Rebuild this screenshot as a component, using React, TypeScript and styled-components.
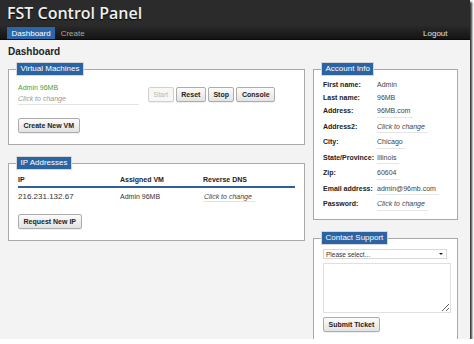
import React from "react";
import styled, { createGlobalStyle } from "styled-components";

const Global = createGlobalStyle`
  html, body { margin: 0; padding: 0; background: #ffffff; }
  body { font-family: "Liberation Sans", Arial, sans-serif; color: #222; }
  * { box-sizing: border-box; }
`;

const Window = styled.div`
  width: 470px;
  height: 339px;
  overflow: hidden;
  background: #f3f3f3;
  box-shadow: 2px 2px 2px rgba(0, 0, 0, 0.8);
  display: flex;
  flex-direction: column;
`;

const TitleBar = styled.header`
  flex-shrink: 0;
  height: 26px;
  background: #2b2b2b;
  display: flex;
  align-items: center;
  padding-left: 7px;
`;

const Title = styled.h1`
  margin: 0;
  font: 600 16px/1 "Open Sans", "Noto Sans", sans-serif;
  color: #f0f0f0;
  text-shadow: 0 1px 1px #000;
`;

const NavBar = styled.nav`
  flex-shrink: 0;
  height: 14px;
  background: linear-gradient(#282828, #151515);
  border-bottom: 1px solid #0a0a0a;
  display: flex;
  align-items: stretch;
  padding: 1px 17px 0 7px;
`;

const NavLink = styled.a<{ $active?: boolean; $light?: boolean }>`
  display: flex;
  align-items: center;
  padding: 0 4.5px;
  font-size: 8px;
  color: ${(p) => (p.$active ? "#ffffff" : p.$light ? "#e0e0e0" : "#a8a8a8")};
  background: ${(p) => (p.$active ? "#2b67a8" : "transparent")};
  text-decoration: none;
  margin-right: 1px;
`;

const Spacer = styled.div`
  flex: 1;
`;

const Main = styled.main`
  flex-shrink: 0;
  padding: 7px 13px 0 8px;
`;

const Heading = styled.h2`
  margin: 0 0 6px;
  font: bold 10px/10px "Liberation Sans", Arial, sans-serif;
  color: #222;
`;

const Columns = styled.div`
  display: grid;
  grid-template-columns: 297px 145px;
  column-gap: 8px;
  align-items: start;
`;

const Column = styled.div`
  display: flex;
  flex-direction: column;
  gap: 12px;
`;

const Panel = styled.fieldset<{ $pb: number; $pr?: number }>`
  margin: 0;
  min-width: 0;
  border: 1px solid #a9a9a9;
  background: #ffffff;
  padding: 0 ${(p) => p.$pr ?? 9}px ${(p) => p.$pb}px 9px;
`;

const Legend = styled.legend`
  background: #2c64a3;
  color: #ffffff;
  font: 8px/10px "Liberation Sans", Arial, sans-serif;
  padding: 1px 3.5px;
  margin-left: -1px;
  box-shadow: 0 0 0 1px #d6d6d6;
`;

const VmRow = styled.div`
  display: flex;
  align-items: center;
  margin-top: 9px;
`;

const VmName = styled.div`
  width: 121px;
  display: flex;
  flex-direction: column;
  margin-right: 9px;
`;

const GreenName = styled.div`
  font-size: 7px;
  line-height: 8px;
  color: #44a044;
`;

const Editable = styled.span<{ $block?: boolean; $muted?: boolean }>`
  display: ${(p) => (p.$block ? "block" : "inline-block")};
  font-size: 7px;
  line-height: 8px;
  font-style: italic;
  color: ${(p) => (p.$muted ? "#9a9a9a" : "#444")};
  border-bottom: 1px solid #e3e3e3;
  padding: ${(p) => (p.$block ? "3px 0 1px" : "0 3px 0 1px")};
`;

const ButtonGroup = styled.div`
  display: flex;
  gap: 2px;
`;

const Button = styled.button`
  height: 15px;
  padding: 0 4.5px;
  font: bold 7px/1 "Liberation Sans", Arial, sans-serif;
  color: #222;
  background: linear-gradient(#fbfbfb, #e3e3e3);
  border: 1px solid #acacac;
  border-radius: 2px;
  box-shadow: 0 1px 0 rgba(0, 0, 0, 0.06);
  cursor: pointer;

  &:disabled {
    font-weight: normal;
    color: #b8b8b8;
    border-color: #d0d0d0;
    background: #f7f7f7;
  }
`;

const BlockButton = styled(Button)<{ $mt: number }>`
  align-self: flex-start;
  margin-top: ${(p) => p.$mt}px;
`;

const PanelBody = styled.div`
  display: flex;
  flex-direction: column;
`;

const Table = styled.div`
  display: grid;
  grid-template-columns: 102px 83px 1fr;
  margin-top: 7px;
`;

const HeadCell = styled.div`
  font: bold 7px/8px "Liberation Sans", Arial, sans-serif;
  color: #222;
  padding-bottom: 2px;
  border-bottom: 2px solid #2f609c;
`;

const Cell = styled.div<{ $size?: number }>`
  font-size: ${(p) => p.$size ?? 7}px;
  line-height: 8px;
  color: #333;
  padding-top: 5px;
`;

const InfoList = styled.div`
  margin-top: 3.5px;
  display: flex;
  flex-direction: column;
`;

const InfoRow = styled.div`
  display: grid;
  grid-template-columns: 54px 1fr;
  align-items: start;
  padding: 2.5px 0;
  font-size: 7px;
  line-height: 8px;
`;

const Label = styled.span`
  font-weight: bold;
  color: #222;
`;

const Value = styled.span<{ $editable?: boolean; $italic?: boolean }>`
  justify-self: start;
  color: #444;
  font-style: ${(p) => (p.$italic ? "italic" : "normal")};
  ${(p) =>
    p.$editable
      ? "padding: 0 3px 1.5px 0; border-bottom: 1px solid #e6e6e6;"
      : ""}
`;

const SelectBox = styled.div`
  margin-top: 5px;
  width: 124px;
  height: 10px;
  border: 1px solid #d8d8d8;
  background: #fff;
  display: flex;
  align-items: center;
  justify-content: space-between;
  padding: 0 3px 0 2px;
  font-size: 6.5px;
  color: #333;
`;

const Caret = styled.span`
  width: 0;
  height: 0;
  border-left: 2px solid transparent;
  border-right: 2px solid transparent;
  border-top: 2.5px solid #222;
`;

const TextArea = styled.textarea`
  margin-top: 4px;
  width: 128px;
  height: 50px;
  border: 1px solid #e0e0e0;
  background: #fff;
  font-size: 7px;
  padding: 2px;
  display: block;
`;

const account: { label: string; value: string; editable?: boolean; italic?: boolean }[] = [
  { label: "First name:", value: "Admin" },
  { label: "Last name:", value: "96MB" },
  { label: "Address:", value: "96MB.com", editable: true },
  { label: "Address2:", value: "Click to change", editable: true, italic: true },
  { label: "City:", value: "Chicago", editable: true },
  { label: "State/Province:", value: "Illinois", editable: true },
  { label: "Zip:", value: "60604", editable: true },
  { label: "Email address:", value: "admin@96mb.com", editable: true },
  { label: "Password:", value: "Click to change", editable: true, italic: true },
];

export default function App() {
  return (
    <>
      <Global />
      <Window>
        <TitleBar>
          <Title>FST Control Panel</Title>
        </TitleBar>
        <NavBar>
          <NavLink $active>Dashboard</NavLink>
          <NavLink>Create</NavLink>
          <Spacer />
          <NavLink $light>Logout</NavLink>
        </NavBar>
        <Main>
          <Heading>Dashboard</Heading>
          <Columns>
            <Column>
              <Panel $pb={11}>
                <Legend>Virtual Machines</Legend>
                <PanelBody>
                  <VmRow>
                    <VmName>
                      <GreenName>Admin 96MB</GreenName>
                      <Editable $block $muted>
                        Click to change
                      </Editable>
                    </VmName>
                    <ButtonGroup>
                      <Button disabled>Start</Button>
                      <Button>Reset</Button>
                      <Button>Stop</Button>
                      <Button>Console</Button>
                    </ButtonGroup>
                  </VmRow>
                  <BlockButton $mt={13}>Create New VM</BlockButton>
                </PanelBody>
              </Panel>
              <Panel $pb={11}>
                <Legend>IP Addresses</Legend>
                <PanelBody>
                  <Table>
                    <HeadCell>IP</HeadCell>
                    <HeadCell>Assigned VM</HeadCell>
                    <HeadCell>Reverse DNS</HeadCell>
                    <Cell $size={8}>216.231.132.67</Cell>
                    <Cell>Admin 96MB</Cell>
                    <Cell>
                      <Editable>Click to change</Editable>
                    </Cell>
                  </Table>
                  <BlockButton $mt={12}>Request New IP</BlockButton>
                </PanelBody>
              </Panel>
            </Column>
            <Column>
              <Panel $pb={6}>
                <Legend>Account Info</Legend>
                <InfoList>
                  {account.map((r) => (
                    <InfoRow key={r.label}>
                      <Label>{r.label}</Label>
                      <Value $editable={r.editable} $italic={r.italic}>
                        {r.value}
                      </Value>
                    </InfoRow>
                  ))}
                </InfoList>
              </Panel>
              <Panel $pb={12} $pr={6}>
                <Legend>Contact Support</Legend>
                <PanelBody>
                  <SelectBox>
                    <span>Please select...</span>
                    <Caret />
                  </SelectBox>
                  <TextArea />
                  <BlockButton $mt={4}>Submit Ticket</BlockButton>
                </PanelBody>
              </Panel>
            </Column>
          </Columns>
        </Main>
      </Window>
    </>
  );
}
